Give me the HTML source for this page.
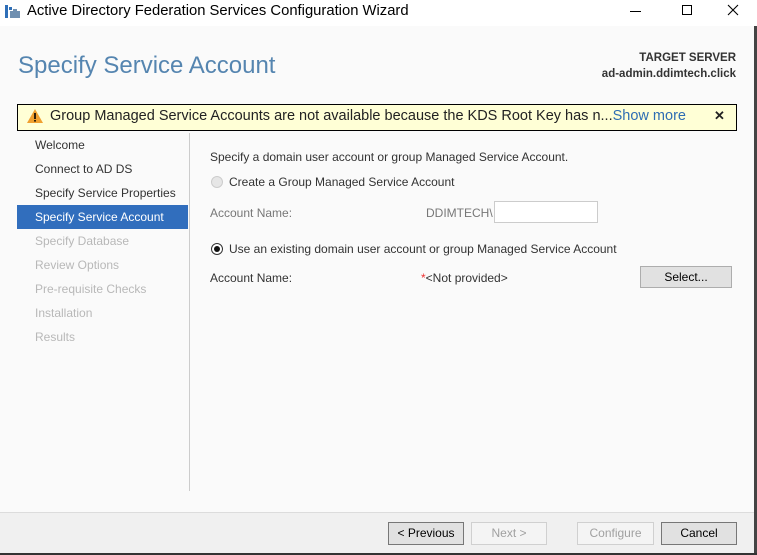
<!DOCTYPE html>
<html><head><meta charset="utf-8"><style>
*{margin:0;padding:0;box-sizing:border-box}
body{width:757px;height:555px;overflow:hidden;background:#fff;font-family:"Liberation Sans",sans-serif;position:relative;color:#222}
.a{position:absolute;white-space:nowrap}
.s{font-size:12px}
.btn{position:absolute;top:522px;height:23px;border:1px solid #adadad;background:#e1e1e1;font-size:12px;text-align:center;line-height:21px;color:#000}
.dis{background:#f4f4f4;border-color:#d0d0d0;color:#a0a0a0}
.nav{position:absolute;left:35px;font-size:12px;color:#333}
.g{color:#b8b8b8}
</style></head><body>
<div class="a" style="left:0;top:0;width:757px;height:26px;background:#fff"></div>
<svg class="a" style="left:5px;top:5px" width="16" height="14"><rect x="0" y="0" width="3" height="13" fill="#2f6fb8"/><rect x="4" y="2" width="3" height="3" fill="#2f6fb8"/><rect x="5" y="6" width="10" height="7" fill="#6f8fb0"/><rect x="8" y="4" width="4" height="2" fill="#6f8fb0"/></svg>
<div class="a" style="left:27px;top:3px;font-size:14.8px;color:#000">Active Directory Federation Services Configuration Wizard</div>
<div class="a" style="left:630px;top:11px;width:11px;height:1px;background:#000"></div>
<div class="a" style="left:682px;top:5px;width:10px;height:10px;border:1px solid #000"></div>
<svg class="a" style="left:727px;top:4px" width="12" height="12"><path d="M1 1L11 11M11 1L1 11" stroke="#000" stroke-width="1.1"/></svg>
<div class="a" style="left:0;top:26px;width:754px;height:486px;background:#fafafa"></div>
<div class="a" style="left:754px;top:26px;width:3px;height:527px;background:#444"></div>
<div class="a" style="left:18px;top:52px;font-size:24px;color:#5585b0;font-weight:300">Specify Service Account</div>
<div class="a s" style="right:21px;top:50px;font-weight:bold;color:#333;text-align:right;line-height:16px;font-size:11.5px">TARGET SERVER<br>ad-admin.ddimtech.click</div>
<div class="a" style="left:17px;top:104px;width:720px;height:27px;background:#ffffd6;border:1px solid #000"></div>
<svg class="a" style="left:27px;top:109px" width="16" height="14"><path d="M8 0L16 14H0Z" fill="#f0a030"/><rect x="7.2" y="4" width="1.6" height="6" fill="#000"/><rect x="7.2" y="11" width="1.6" height="1.6" fill="#000"/></svg>
<div class="a" style="left:50px;top:108px;font-size:14.5px;color:#222">Group Managed Service Accounts are not available because the KDS Root Key has n...<span style="color:#2e6db3">Show more</span></div>
<div class="a" style="left:714px;top:108px;font-size:13px;font-weight:bold">✕</div>
<div class="a" style="left:189px;top:133px;width:1px;height:358px;background:#ccc"></div>
<div class="nav" style="top:138px">Welcome</div>
<div class="nav" style="top:162px">Connect to AD DS</div>
<div class="nav" style="top:186px">Specify Service Properties</div>
<div class="a" style="left:17px;top:205px;width:171px;height:24px;background:#316ebd"></div>
<div class="nav" style="top:210px;color:#fff">Specify Service Account</div>
<div class="nav g" style="top:234px">Specify Database</div>
<div class="nav g" style="top:258px">Review Options</div>
<div class="nav g" style="top:282px">Pre-requisite Checks</div>
<div class="nav g" style="top:306px">Installation</div>
<div class="nav g" style="top:330px">Results</div>
<div class="a s" style="left:210px;top:150px;color:#333">Specify a domain user account or group Managed Service Account.</div>
<div class="a" style="left:211px;top:176px;width:12px;height:12px;border-radius:50%;border:1px solid #ccc;background:#e6e6e6"></div>
<div class="a s" style="left:229px;top:175px;color:#333">Create a Group Managed Service Account</div>
<div class="a s" style="left:210px;top:206px;color:#777">Account Name:</div>
<div class="a s" style="left:426px;top:206px;color:#777">DDIMTECH\</div>
<div class="a" style="left:494px;top:201px;width:104px;height:22px;border:1px solid #ccc;background:#fff"></div>
<div class="a" style="left:211px;top:243px;width:12px;height:12px;border-radius:50%;border:1px solid #333;background:#fff"></div>
<div class="a" style="left:214px;top:246px;width:6px;height:6px;border-radius:50%;background:#111"></div>
<div class="a s" style="left:229px;top:242px;color:#333">Use an existing domain user account or group Managed Service Account</div>
<div class="a s" style="left:210px;top:271px;color:#333">Account Name:</div>
<div class="a s" style="left:421px;top:271px;color:#333"><span style="color:#e33">*</span>&lt;Not provided&gt;</div>
<div class="btn" style="left:640px;top:266px;width:92px;height:22px">Select...</div>
<div class="a" style="left:0;top:512px;width:754px;height:41px;background:#f0f0f0;border-top:1px solid #dcdcdc"></div>
<div class="a" style="left:0;top:553px;width:757px;height:2px;background:#333"></div>
<div class="btn" style="left:388px;width:76px;border-color:#777">&lt; Previous</div>
<div class="btn dis" style="left:471px;width:76px">Next &gt;</div>
<div class="btn dis" style="left:577px;width:77px">Configure</div>
<div class="btn" style="left:661px;width:76px;border-color:#777">Cancel</div>
</body></html>
